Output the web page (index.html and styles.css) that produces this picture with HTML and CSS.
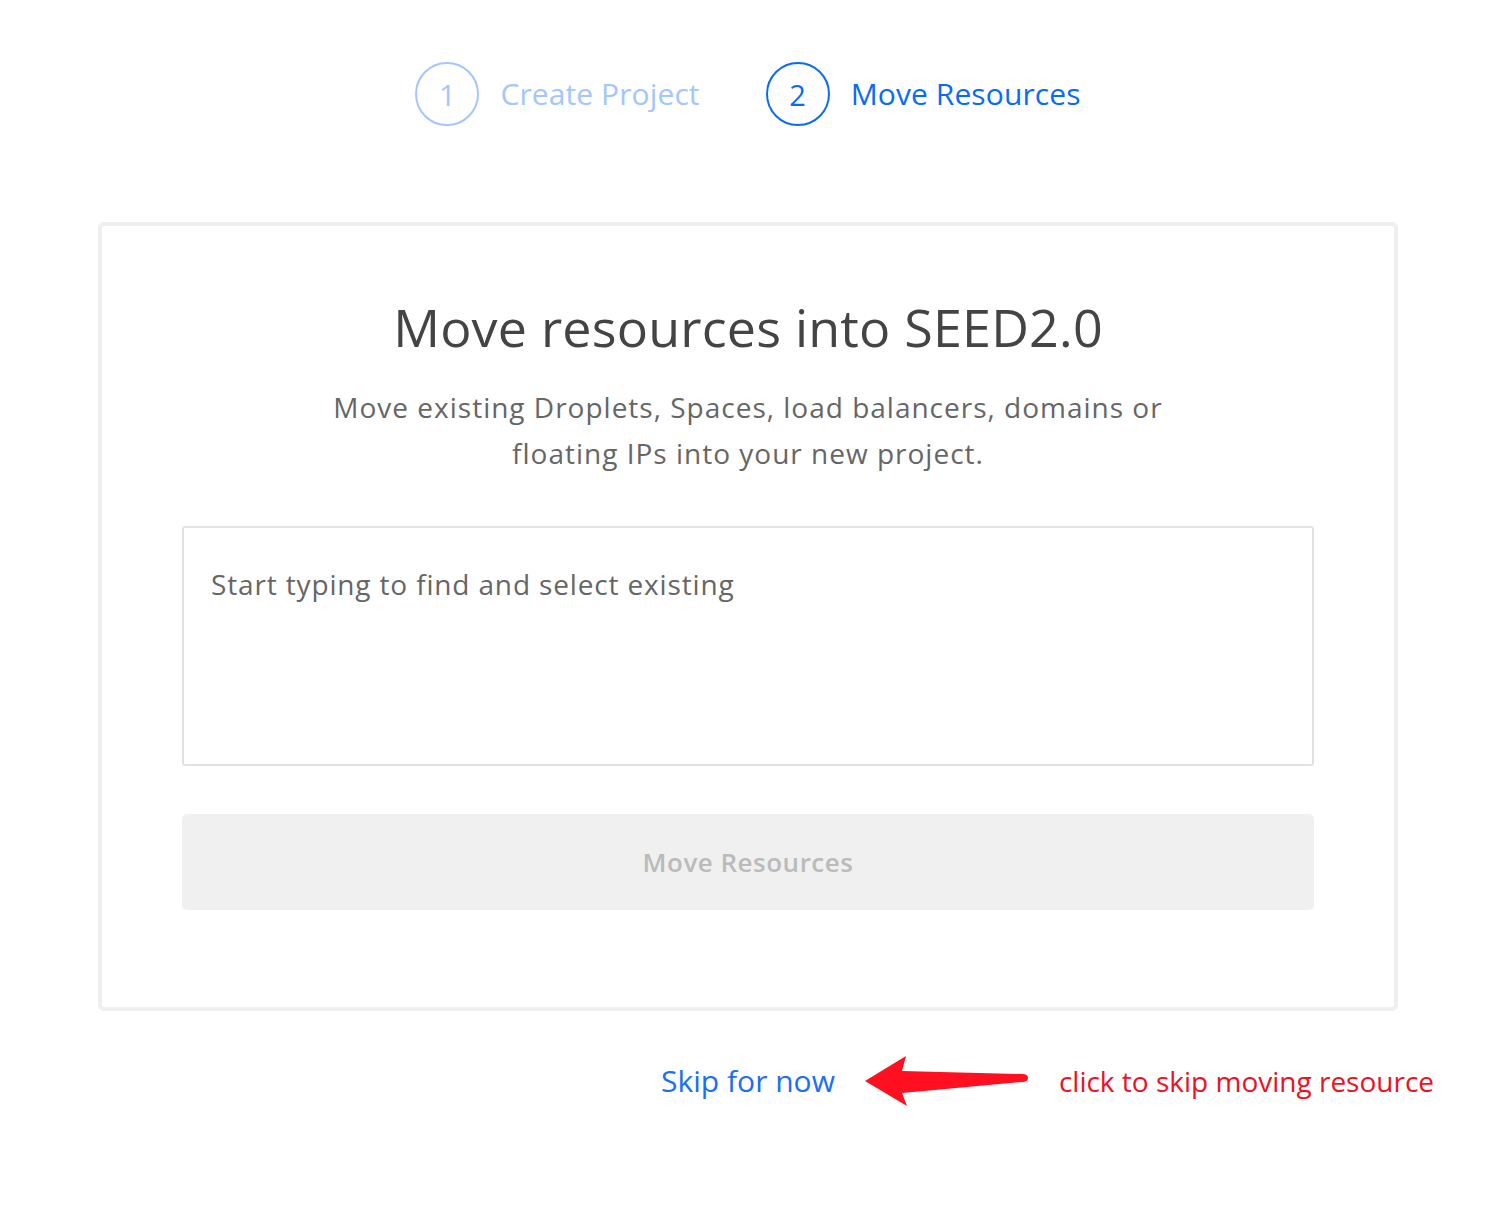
FILE: index.html
```html
<!DOCTYPE html>
<html lang="en">
<head>
<meta charset="utf-8">
<title>Move Resources</title>
<link rel="stylesheet" href="styles.css">
</head>
<body>
<div class="page">
  <ol class="steps">
    <li class="step step-done"><span class="step-num">1</span><span class="step-label">Create Project</span></li>
    <li class="step step-active"><span class="step-num">2</span><span class="step-label">Move Resources</span></li>
  </ol>

  <section class="card">
    <h1 class="card-title">Move resources into SEED2.0</h1>
    <p class="card-desc">Move existing Droplets, Spaces, load balancers, domains or floating IPs into your new project.</p>
    <div class="picker">
      <span class="picker-placeholder">Start typing to find and select existing</span>
    </div>
    <button class="btn-move" disabled>Move Resources</button>
  </section>

  <div class="footer">
    <div></div>
    <a class="skip" href="#">Skip for now</a>
    <div class="note">
      <svg class="arrow" width="166" height="52" viewBox="0 0 166 52" aria-hidden="true">
        <path d="M3 26 L44 1 L40 16 L160 19 Q166 19 166 23 Q166 27 160 27 L40 38 L45 51 Z" fill="#ff0f1f"/>
      </svg>
      <span class="note-text">click to skip moving resource</span>
    </div>
  </div>
</div>
</body>
</html>
```

FILE: styles.css
```css
* { box-sizing: border-box; }

html, body {
  margin: 0;
  padding: 0;
  background: #ffffff;
}

body {
  font-family: "Open Sans", "Lato", "Liberation Sans", sans-serif;
  color: #444444;
}

.page {
  width: 1300px;
  margin-left: 98px;
  padding-top: 62px;
}

.steps {
  list-style: none;
  margin: 0;
  padding: 0;
  display: flex;
  justify-content: center;
  gap: 66px;
}

.step {
  display: flex;
  align-items: center;
  gap: 21px;
}

.step-num {
  width: 64px;
  height: 64px;
  border-radius: 50%;
  border: 2px solid currentColor;
  display: flex;
  align-items: center;
  justify-content: center;
  font-size: 29px;
  line-height: 1;
}

.step-label {
  font-size: 30px;
  letter-spacing: 0.1px;
  line-height: 1;
}

.step-done { color: #a3c6ff; }
.step-active { color: #0a6bf5; }

.card {
  margin-top: 96px;
  border: 4px solid #efefef;
  border-radius: 6px;
  padding: 70px 80px 97px;
  display: flex;
  flex-direction: column;
  align-items: center;
}

.card-title {
  margin: 0;
  font-size: 52px;
  letter-spacing: 0.2px;
  font-weight: 400;
  line-height: 62px;
  color: #444444;
}

.card-desc {
  margin: 26px 0 0;
  max-width: 900px;
  text-align: center;
  font-size: 28px;
  letter-spacing: 1px;
  line-height: 46px;
  color: #666666;
}

.picker {
  margin-top: 50px;
  width: 100%;
  height: 240px;
  border: 2px solid #e2e2e2;
  border-radius: 3px;
  padding: 36px 27px;
}

.picker-placeholder {
  font-size: 28px;
  letter-spacing: 0.85px;
  line-height: 40px;
  color: #666666;
}

.btn-move {
  margin-top: 48px;
  width: 100%;
  height: 96px;
  border: 0;
  border-radius: 5px;
  background: #f0f0f0;
  color: #bbbbbb;
  font-family: inherit;
  font-size: 26px;
  letter-spacing: 0.5px;
  font-weight: 600;
}

.footer {
  display: grid;
  grid-template-columns: minmax(0, 1fr) auto minmax(0, 1fr);
  align-items: center;
  margin-top: 44px;
}

.skip {
  color: #1a6ff5;
  text-decoration: none;
  font-size: 30px;
  line-height: 44px;
}

.note {
  display: flex;
  align-items: center;
  padding-left: 27px;
  gap: 31px;
  white-space: nowrap;
}

.arrow { display: block; flex: none; }

.note-text {
  color: #ee1122;
  font-size: 28px;
  line-height: 40px;
}
```
